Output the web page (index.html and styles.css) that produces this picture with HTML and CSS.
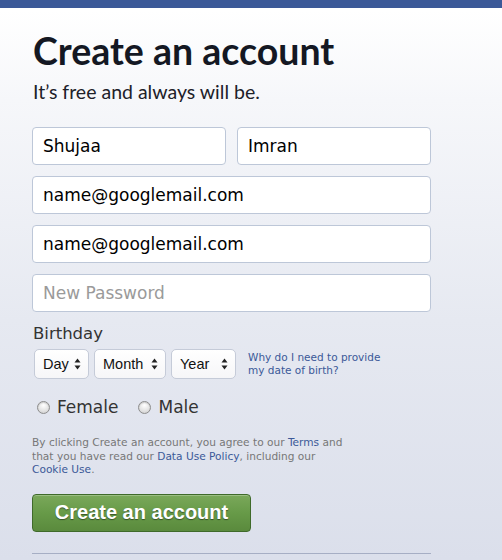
FILE: index.html
```html
<!DOCTYPE html>
<html lang="en">

<head>
  <meta charset="utf-8">
  <title>Create an account</title>
  <link rel="stylesheet" href="styles.css">
</head>

<body>
  <div class="topBar"></div>

  <div class="signup">
    <h1 class="title">Create an account</h1>
    <p class="tagline">It’s free and always will be.</p>

    <form class="regForm">
      <div class="nameRow">
        <input class="textField" type="text" value="Shujaa">
        <input class="textField" type="text" value="Imran">
      </div>
      <input class="textField" type="text" value="name@googlemail.com">
      <input class="textField" type="text" value="name@googlemail.com">
      <input class="textField" type="password" placeholder="New Password">

      <div class="birthday">
        <div class="fieldLabel">Birthday</div>
        <div class="birthdayRow">
          <span class="selectBox selectDay">
            <select><option>Day</option></select>
            <svg class="selectArrows" width="7" height="12" viewBox="0 0 7 12"><path d="M3.5 0.5L6.5 4.5H0.5Z M3.5 11.5L6.5 7.5H0.5Z" fill="#222"/></svg>
          </span>
          <span class="selectBox selectMonth">
            <select><option>Month</option></select>
            <svg class="selectArrows" width="7" height="12" viewBox="0 0 7 12"><path d="M3.5 0.5L6.5 4.5H0.5Z M3.5 11.5L6.5 7.5H0.5Z" fill="#222"/></svg>
          </span>
          <span class="selectBox selectYear">
            <select><option>Year</option></select>
            <svg class="selectArrows" width="7" height="12" viewBox="0 0 7 12"><path d="M3.5 0.5L6.5 4.5H0.5Z M3.5 11.5L6.5 7.5H0.5Z" fill="#222"/></svg>
          </span>
          <a class="whyLink" href="#">Why do I need to provide my date of birth?</a>
        </div>
      </div>

      <div class="gender">
        <label class="radioOption"><span class="radio"></span>Female</label>
        <label class="radioOption"><span class="radio"></span>Male</label>
      </div>

      <p class="terms">
        By clicking Create an account, you agree to our <a href="#">Terms</a> and<br>
        that you have read our <a href="#">Data Use Policy</a>, including our<br>
        <a href="#">Cookie Use</a>.
      </p>

      <button class="submitButton" type="button">Create an account</button>

      <div class="divider"></div>
    </form>
  </div>
</body>

</html>
```

FILE: styles.css
```css
* {
  margin: 0;
  padding: 0;
  box-sizing: border-box;
}

html,
body {
  height: 100%;
}

body {
  background: linear-gradient(#ffffff 10px, #f6f7fa 100px, #e6e9f1 320px, #dbdfeb 560px);
  font-family: "DejaVu Sans", sans-serif;
  color: #333;
  overflow: hidden;
}

.topBar {
  height: 8px;
  background-color: #3b5998;
}

.signup {
  width: 431px;
  padding-left: 32px;
}

.title {
  font-family: Lato, sans-serif;
  font-weight: 700;
  font-size: 37.5px;
  line-height: 44px;
  color: #141823;
  margin-top: 21px;
  margin-left: 1px;
}

.tagline {
  font-family: Lato, sans-serif;
  font-size: 19.5px;
  line-height: 24px;
  color: #1d2129;
  margin-top: 7px;
  margin-left: 1px;
}

.regForm {
  display: flex;
  flex-direction: column;
  gap: 11px;
  margin-top: 23px;
}

.nameRow {
  display: flex;
  gap: 11px;
}

.textField {
  width: 100%;
  height: 38px;
  border: 1px solid #bdc7d8;
  border-radius: 4px;
  background: #fff;
  padding: 0 10px;
  font-family: "DejaVu Sans", sans-serif;
  font-size: 17px;
  color: #000;
  outline: none;
}

.textField::placeholder {
  color: #9a9a9a;
}

.birthday {
  margin-top: 1px;
}

.fieldLabel {
  font-size: 16.5px;
  line-height: 20px;
  color: #333;
  margin-left: 1px;
}

.birthdayRow {
  display: flex;
  align-items: center;
  gap: 5px;
  margin-top: 5px;
  padding-left: 2px;
}

.selectBox {
  position: relative;
  display: block;
  height: 30px;
}

.selectBox select {
  appearance: none;
  -webkit-appearance: none;
  width: 100%;
  height: 100%;
  border: 1px solid #c5cbd8;
  border-radius: 5px;
  background: linear-gradient(#ffffff, #f6f6f8);
  font-family: "Liberation Sans", sans-serif;
  font-size: 14.5px;
  color: #111;
  padding-left: 8px;
  outline: none;
}

.selectArrows {
  position: absolute;
  right: 8px;
  top: 9px;
  pointer-events: none;
}

.selectDay {
  width: 55px;
}

.selectMonth {
  width: 72px;
}

.selectYear {
  width: 65px;
}

.whyLink {
  margin-left: 7px;
  width: 145px;
  font-size: 10.5px;
  line-height: 13px;
  color: #3b5998;
  text-decoration: none;
}

.gender {
  display: flex;
  gap: 20px;
  margin-top: 5px;
  padding-left: 5px;
}

.radioOption {
  display: flex;
  align-items: center;
  gap: 7px;
  font-size: 17px;
  line-height: 24px;
  color: #333;
}

.radio {
  width: 13px;
  height: 13px;
  border-radius: 50%;
  border: 1px solid #8d8d8d;
  background: radial-gradient(circle at 50% 30%, #ffffff, #e2e2e2 60%, #c8c8c8);
  box-shadow: inset 0 1px 1px rgba(0, 0, 0, 0.15);
}

.terms {
  font-size: 10.6px;
  line-height: 13.6px;
  color: #777;
  margin-top: 6px;
}

.terms a {
  color: #3b5998;
  text-decoration: none;
}

.submitButton {
  align-self: flex-start;
  width: 219px;
  height: 38px;
  margin-top: 6px;
  border: 1px solid #3f6a2a;
  border-radius: 4px;
  background: linear-gradient(#7aa85a, #679a48 50%, #5a8a3d);
  box-shadow: inset 0 1px 0 rgba(255, 255, 255, 0.25);
  font-family: "Liberation Sans", sans-serif;
  font-weight: 700;
  font-size: 20px;
  color: #fff;
  text-shadow: 0 1px 1px rgba(0, 0, 0, 0.45);
}

.divider {
  height: 1px;
  margin-top: 10px;
  background-color: #a6aec4;
}
```
